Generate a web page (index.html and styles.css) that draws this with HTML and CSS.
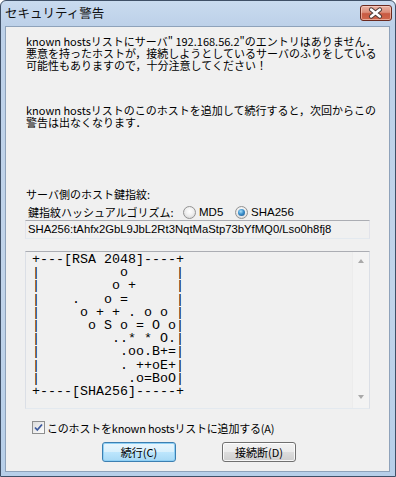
FILE: index.html
```html
<!DOCTYPE html>
<html lang="ja">
<head>
<meta charset="utf-8">
<title>セキュリティ警告</title>
<link rel="stylesheet" href="styles.css">
</head>
<body>
<div class="window">
  <div class="titlebar">
    <span class="title">セキュリティ警告</span>
    <span class="close">
      <svg width="32" height="16" viewBox="0 0 32 16">
        <path d="M11.5 4.5 L20.5 11.5 M20.5 4.5 L11.5 11.5" stroke="#4a3a36" stroke-width="4.6" stroke-linecap="round" fill="none"/>
        <path d="M11.5 4.5 L20.5 11.5 M20.5 4.5 L11.5 11.5" stroke="#ffffff" stroke-width="2.6" stroke-linecap="round" fill="none"/>
      </svg>
    </span>
  </div>
  <div class="client">
    <p class="msg msg1">known hostsリストにサーバ" 192.168.56.2"のエントリはありません．<br>悪意を持ったホストが，接続しようとしているサーバのふりをしている<br>可能性もありますので，十分注意してください！</p>
    <p class="msg msg2">known hostsリストのこのホストを追加して続行すると，次回からこの<br>警告は出なくなります．</p>
    <div class="fp-label">サーバ側のホスト鍵指紋:</div>
    <div class="algo-row">
      <span class="algo-label">鍵指紋ハッシュアルゴリズム:</span>
      <span class="radio-opt md5"><span class="radio"></span><span class="radio-text">MD5</span></span>
      <span class="radio-opt"><span class="radio checked"></span><span class="radio-text">SHA256</span></span>
    </div>
    <div class="fp-box">SHA256:tAhfx2GbL9JbL2Rt3NqtMaStp73bYfMQ0/Lso0h8fj8</div>
    <div class="art-box">
<pre class="art">+---[RSA 2048]----+
|          o      |
|         o +     |
|    .   o =      |
|     o + + . o o |
|      o S o = O o|
|         ..* * O.|
|          .oo.B+=|
|          . ++oE+|
|           .o=BoO|
+----[SHA256]-----+</pre>
      <div class="scrollbar">
        <span class="arrow up"></span>
        <span class="arrow down"></span>
      </div>
    </div>
    <div class="check-row">
      <span class="checkbox">
        <svg width="11" height="11" viewBox="0 0 11 11"><path d="M2 5.5 L4.3 8 L9 2.5" stroke="#3d5a9e" stroke-width="1.8" fill="none"/></svg>
      </span>
      <span class="check-text">このホストをknown hostsリストに追加する(A)</span>
    </div>
    <div class="buttons">
      <button class="btn default">続行(C)</button>
      <button class="btn">接続断(D)</button>
    </div>
  </div>
</div>
</body>
</html>
```

FILE: styles.css
```css
* { box-sizing: border-box; }
html, body { margin: 0; padding: 0; }
body {
  width: 396px;
  height: 477px;
  overflow: hidden;
  background: #ffffff;
  font-family: "Noto Sans CJK JP", "Liberation Sans", sans-serif;
  font-size: 11px;
  color: #000;
}
.window {
  width: 396px;
  height: 477px;
  display: flex;
  flex-direction: column;
  border: 1px solid #3f5067;
  border-radius: 6px 6px 0 0;
  background: linear-gradient(to bottom, #c9dbef 0, #bdd1e9 24px, #c1d4ea 60%, #b7cfe9 100%);
}
.titlebar {
  height: 25px;
  display: flex;
  align-items: flex-start;
  padding-left: 4px;
}
.title {
  font-size: 12.5px;
  line-height: 14px;
  margin-top: 5px;
  color: #111;
}
.close {
  margin-left: auto;
  margin-right: 3px;
  margin-top: 4px;
  width: 32px;
  height: 16px;
  border: 1px solid #6b2a1f;
  border-radius: 3px;
  background: linear-gradient(to bottom, #eab2a3 0, #dc8e7a 45%, #c85a42 55%, #d0674c 100%);
  box-shadow: inset 0 0 0 1px rgba(255,220,210,0.55);
  display: flex;
  align-items: center;
  justify-content: center;
  overflow: hidden;
}
.close svg { display: block; margin-left: -1px; margin-top: -1px; }
.client {
  flex: 1;
  margin: 0 5px 4px 4px;
  border: 1px solid #8ea2ba;
  background: #f0f0f0;
  display: flex;
  flex-direction: column;
}
.msg {
  margin: 0;
  padding-left: 20px;
  line-height: 12px;
  white-space: nowrap;
}
.msg1 { margin-top: 8px; }
.msg2 { margin-top: 33px; }
.fp-label {
  margin-top: 60px;
  padding-left: 20px;
  line-height: 12px;
}
.algo-row {
  margin-top: 5px;
  height: 14px;
  padding-left: 22px;
  display: flex;
  align-items: center;
}
.algo-label { width: 155px; line-height: 12px; }
.radio-opt {
  display: flex;
  align-items: center;
}
.radio-opt.md5 { width: 52px; }
.radio-text { margin-left: 3px; font-family: "Liberation Sans", sans-serif; font-size: 11.5px; }
.radio {
  width: 13px;
  height: 13px;
  border-radius: 50%;
  border: 1px solid #939393;
  background: radial-gradient(circle at 50% 40%, #ffffff 0, #f0f0f0 45%, #cfcfcf 100%);
  position: relative;
}
.radio.checked::after {
  content: "";
  position: absolute;
  left: 2px;
  top: 2px;
  width: 7px;
  height: 7px;
  border-radius: 50%;
  background: radial-gradient(circle at 40% 35%, #a9e0fb 0, #3b8fcb 45%, #1a4f85 100%);
}
.fp-box {
  margin-top: 1px;
  margin-left: 19px;
  width: 345px;
  height: 19px;
  border: 1px solid #e2e3ea;
  border-top-color: #abadb3;
  border-bottom-color: #e3e9ef;
  background: #f0f0f0;
  padding-left: 2px;
  font-family: "Liberation Sans", sans-serif;
  font-size: 11.3px;
  line-height: 17px;
  white-space: nowrap;
}
.art-box {
  margin-top: 12px;
  margin-left: 19px;
  width: 345px;
  height: 158px;
  border: 1px solid #dbdfe6;
  border-top-color: #abadb3;
  border-bottom-color: #e3e9ef;
  background: #f0f0f0;
  display: flex;
}
.art {
  flex: 1;
  margin: 0;
  padding: 1px 0 0 6px;
  font-family: "Liberation Mono", monospace;
  font-size: 13.33px;
  line-height: 13.2px;
  color: #000;
}
.scrollbar {
  width: 17px;
  background: #f3f3f3;
  border-left: 1px solid #ececec;
  display: flex;
  flex-direction: column;
  justify-content: space-between;
  align-items: center;
  padding: 7px 0 9px;
}
.arrow {
  width: 0;
  height: 0;
  border-left: 3.5px solid transparent;
  border-right: 3.5px solid transparent;
}
.arrow.up { border-bottom: 4px solid #a9a9a9; }
.arrow.down { border-top: 4px solid #a9a9a9; }
.check-row {
  margin-top: 12px;
  height: 13px;
  padding-left: 26px;
  display: flex;
  align-items: center;
}
.checkbox {
  width: 13px;
  height: 13px;
  border: 1px solid #8e8f8f;
  background: linear-gradient(135deg, #dcdcdc 0, #fdfdfd 100%);
  display: flex;
  align-items: center;
  justify-content: center;
}
.checkbox svg { display: block; }
.check-text { margin-left: 2px; line-height: 12px; letter-spacing: -0.2px; }
.buttons {
  margin-top: 8px;
  padding-left: 96px;
  display: flex;
  gap: 46px;
}
.btn {
  width: 74px;
  height: 20px;
  padding: 0;
  border: 1px solid #707070;
  border-radius: 3px;
  background: linear-gradient(to bottom, #f2f2f2 0, #ebebeb 50%, #dddddd 50%, #cfcfcf 100%);
  box-shadow: inset 0 0 0 1px rgba(255,255,255,0.8);
  font-family: "Noto Sans CJK JP", "Liberation Sans", sans-serif;
  font-size: 11px;
  line-height: 16px;
  color: #000;
}
.btn.default {
  border-color: #3c7fb1;
  background: linear-gradient(to bottom, #eaf6fd 0, #d9f0fc 50%, #bee6fd 50%, #a7d9f5 100%);
  box-shadow: inset 0 0 0 1px #8fd0f5;
}
```
